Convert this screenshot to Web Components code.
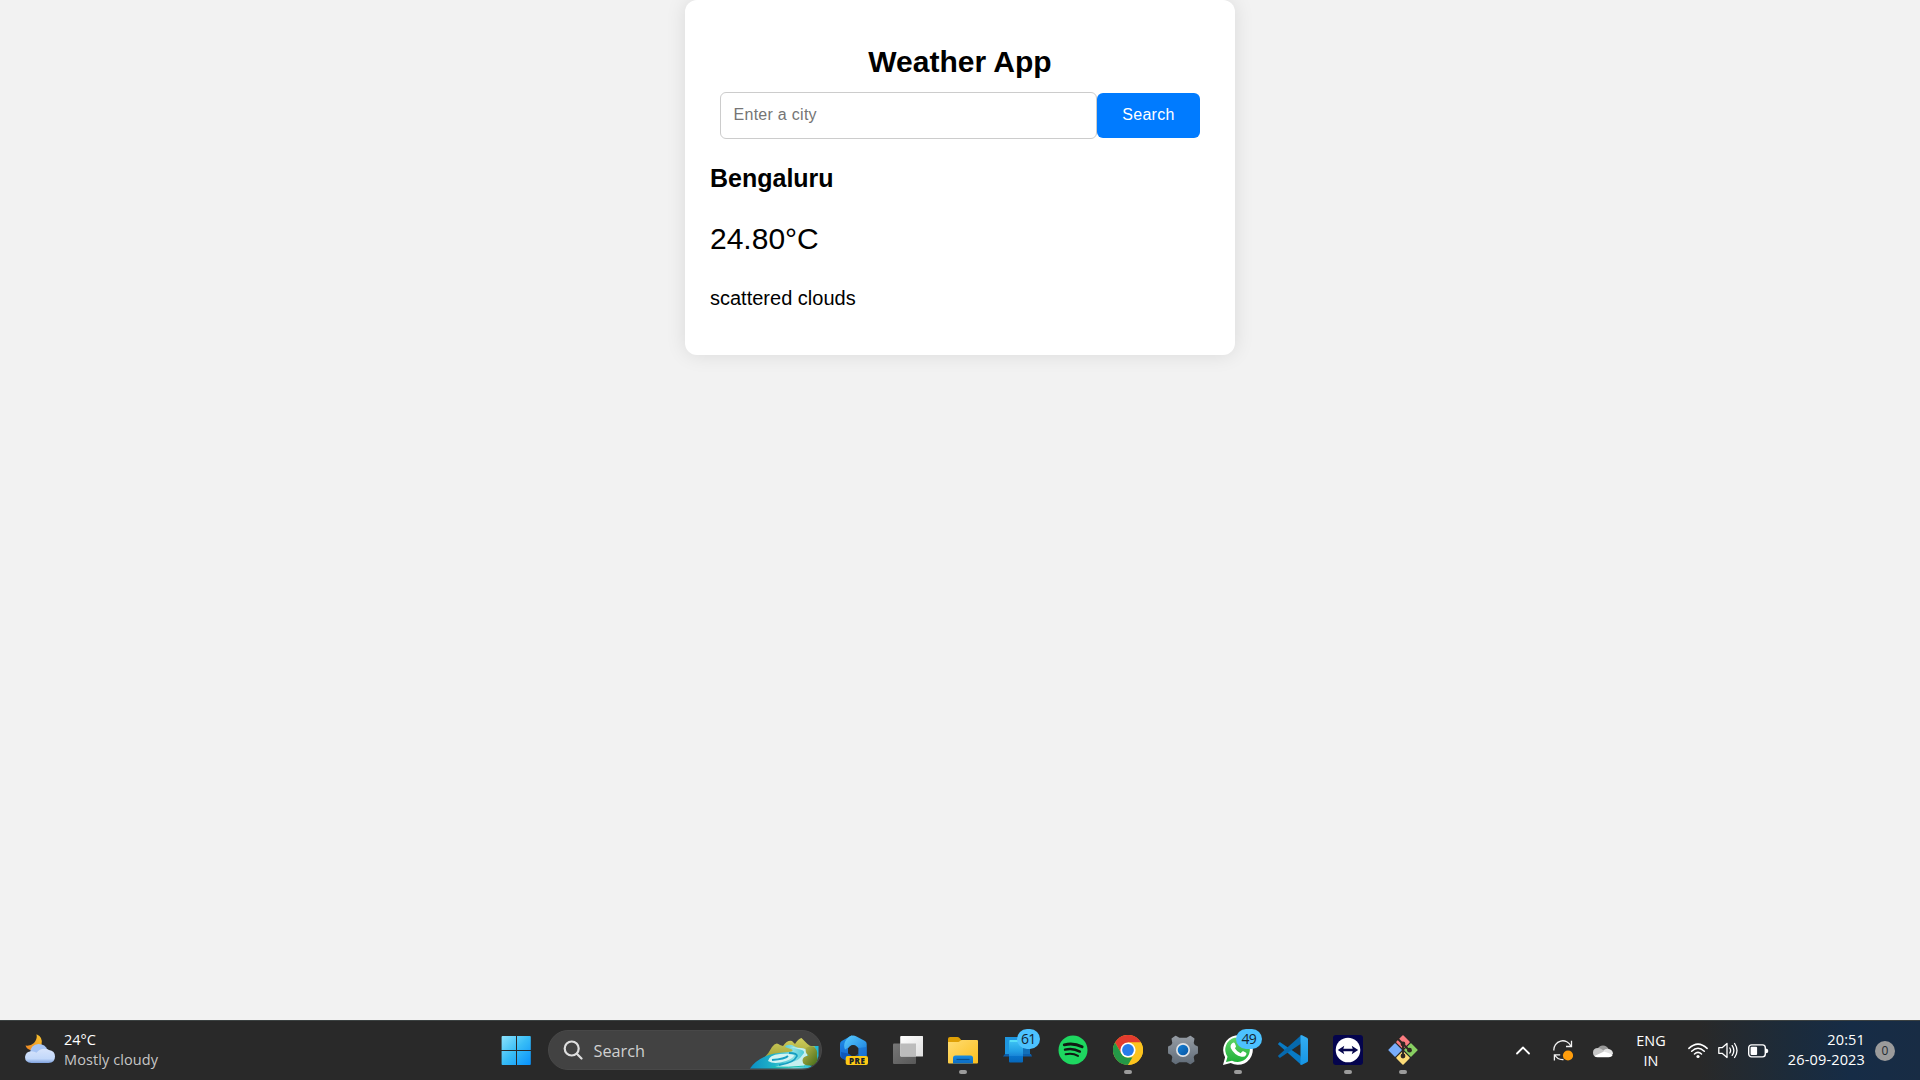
<!DOCTYPE html>
<html lang="en">
<head>
<meta charset="utf-8">
<title>Weather App</title>
<style>
html,body{height:100%;margin:0}
body{background:#f2f2f2;font-family:"Liberation Sans",Arial,sans-serif;color:#000;overflow:hidden}
</style>
</head>
<body>
<app-desktop>
  <weather-card heading="Weather App">
    <city-search slot="search" placeholder="Enter a city" action="Search"></city-search>
    <weather-report city="Bengaluru" temp="24.80°C">scattered clouds</weather-report>
  </weather-card>
  <task-bar slot="bar">
    <weather-widget slot="left" temp="24°C">Mostly cloudy</weather-widget>
    <task-icon name="start"></task-icon>
    <task-search>Search</task-search>
    <task-icon name="dev"></task-icon>
    <task-icon name="view"></task-icon>
    <task-icon name="files" running></task-icon>
    <task-icon name="phone" badge="61"></task-icon>
    <task-icon name="spotify"></task-icon>
    <task-icon name="chrome" running></task-icon>
    <task-icon name="settings"></task-icon>
    <task-icon name="whatsapp" badge="49" running></task-icon>
    <task-icon name="code"></task-icon>
    <task-icon name="teamviewer" running></task-icon>
    <task-icon name="git" running></task-icon>
    <system-tray slot="right"></system-tray>
  </task-bar>
</app-desktop>
<script>
const define = (name, html) => customElements.define(name, class extends HTMLElement {
  constructor() {
    super();
    const t = document.createElement('template');
    t.innerHTML = typeof html === 'function' ? html(this) : html;
    this.attachShadow({mode: 'open'}).append(t.content.cloneNode(true));
  }
});

const icons = {
start: `<defs><linearGradient id="a" gradientUnits="userSpaceOnUse" x1="1" y1="1" x2="29" y2="29"><stop stop-color="#8be2fd"/><stop offset=".5" stop-color="#38bdf6"/><stop offset="1" stop-color="#0a93fb"/></linearGradient></defs><path fill="url(#a)" d="M1.500 1H15v14H.6V2q0-1 .9-1zM16 1h13q.8 0 .8 1v13H16zM.6 16H15v14H1.500q-.9 0-.9-1zM16 16h13.800v13q0 1-.8 1H16z"/>`,
dev: `<defs><linearGradient id="a" x1="0" y1="0" x2="0" y2="1"><stop stop-color="#1f93ea"/><stop offset="1" stop-color="#1659c9"/></linearGradient><linearGradient id="b" x1="0" y1="0" x2="1" y2="1"><stop stop-color="#5accfd"/><stop offset="1" stop-color="#1478dc"/></linearGradient></defs><path fill="url(#a)" d="M2 9Q2 7 3.700 6L14 .3l1 9.700-5 3v5.500l5 3.500v7.500L3.500 23Q2 22 2 20z"/><path fill="url(#b)" d="M11.500 1.500q3.500-2 7 0L27 6q1.700 1 1.700 3v12L20.500 22v-9l-5.500-3-8 4.500q-3-7 4.500-13z"/><path fill="#1767ca" d="M28.700 12v10H15.500l5-3.500V13z" opacity=".55"/><path fill="#0b4fb1" d="m3 17 7 1.500 6 4V29L3.500 23z" opacity=".7"/><circle cx="15.200" cy="15" r="5" fill="#292929"/><rect x="7.700" y="21" width="22.300" height="9" rx="2" fill="#fdc915"/><text x="19.100" y="28.500" text-anchor="middle" font-family="Open Sans,sans-serif" font-weight="800" font-size="8" letter-spacing=".5" fill="#17202a">PRE</text>`,
view: `<defs><linearGradient id="a" x1="0" y1="0" x2="1" y2="1"><stop stop-color="#fff"/><stop offset="1" stop-color="#dedede"/></linearGradient><linearGradient id="b" x1="0" y1="0" x2="1" y2="1"><stop stop-color="#777"/><stop offset="1" stop-color="#585858"/></linearGradient></defs><rect x="0" y="8.500" width="23" height="20.500" rx="1" fill="url(#b)"/><rect x="7.200" y="1" width="23" height="20.500" rx="1" fill="url(#a)"/><path fill="#bcbcbc" d="M7.200 8.500H23v13H8q-.8 0-.8-.8z"/>`,
files: `<defs><linearGradient id="a" x1="0" y1="0" x2="1" y2="1"><stop stop-color="#ffdc72"/><stop offset="1" stop-color="#fbbf1e"/></linearGradient><linearGradient id="b" x1="0" y1="0" x2="0" y2="1"><stop stop-color="#178be0"/><stop offset="1" stop-color="#0c6bc2"/></linearGradient></defs><path fill="#dfa006" d="M0 4q0-2 2-2h7.500q1 0 2 1l2 2.500L9 9H0z"/><path fill="url(#a)" d="M0 7h10.500l3-2H29q1 0 1 1.200V27.500q0 1-1 1H1q-1 0-1-1z"/><path fill="url(#b)" d="M5 28.500V23q0-2.500 2.500-2.500h15q2.500 0 2.500 2.500v5.500z"/><path stroke="#08508f" stroke-width="1.200" d="M8.500 24.500h13"/>`,
phone: `<defs><linearGradient id="a" x1="0" y1="0" x2="0" y2="1"><stop stop-color="#40c5f5"/><stop offset=".5" stop-color="#229fe5"/><stop offset=".7" stop-color="#1987d8"/><stop offset=".72" stop-color="#0874cb"/><stop offset="1" stop-color="#0667ba"/></linearGradient></defs><rect x="2" y="2" width="25" height="17" fill="#126fb8"/><path fill="#1e96df" d="M2 2h13v17H2z"/><path fill="#0c5eab" d="M2 19h26l1 2.500H0z"/><rect x="6" y="5" width="14" height="22.500" rx="1" fill="url(#a)"/><path fill="#57def8" d="M7 5h12v2H7z"/>`,
spotify: `<circle cx="15" cy="15" r="14.500" fill="#1ed760"/><g fill="none" stroke="#101b13" stroke-linecap="round"><path stroke-width="2.900" d="M6.300 9.800q9.300-2.400 17.800 2"/><path stroke-width="2.400" d="M7 14.600q8-2 14.900 2"/><path stroke-width="1.900" d="M7.600 19.200q7-1.600 12.400 1.700"/></g>`,
chrome: `<circle cx="15" cy="15" r="15" fill="#fcc31e"/><path fill="#e33b2e" d="M2 7.500A15 15 0 0 1 28 7.500H15L8.500 18.800z"/><path fill="#249847" d="M2 7.500 8.500 18.800Q11 23 15 22.500h6.500L15 30A15 15 0 0 1 2 7.500z"/><path fill="#fcc31e" d="M15 7.500h13A15 15 0 0 1 15 30l6.500-11.200z"/><circle cx="15" cy="15" r="7.600" fill="#fff"/><circle cx="15" cy="15" r="5.900" fill="#287bea"/>`,
settings: `<defs><linearGradient id="a" x1="0" y1="0" x2="0" y2="1"><stop stop-color="#949ba3"/><stop offset="1" stop-color="#626d79"/></linearGradient><linearGradient id="b" x1="0" y1="0" x2="1" y2="1"><stop stop-color="#1581d6"/><stop offset="1" stop-color="#0755a3"/></linearGradient></defs><path fill="url(#a)" stroke="url(#a)" stroke-width="1.500" stroke-linejoin="round" d="M7.500 1.500 11 3.500h8l3.500-2 3.200 2.400-.8 4.300 1.600 2.600 2.700 1.200v6l-2.700 1.200-1.600 2.600.8 4.300-3.200 2.400-3.500-2h-8l-3.500 2-3.200-2.400.8-4.300-1.600-2.600L.8 18v-6l2.700-1.200 1.600-2.600-.8-4.300z"/><circle cx="15" cy="15" r="7" fill="#e1e4e7"/><circle cx="15" cy="15" r="5.300" fill="url(#b)"/>`,
whatsapp: `<defs><linearGradient id="a" x1="0" y1="0" x2="0" y2="1"><stop stop-color="#60d66a"/><stop offset="1" stop-color="#20b038"/></linearGradient></defs><path fill="#fff" d="M0 30 2.100 22.300A14.800 14.800 0 1 1 7.700 27.900z"/><path fill="url(#a)" d="M3 27 4.500 21.800A12.300 12.300 0 1 1 9 25.700z"/><path fill="#fff" d="M9.200 8.200q1.800-1.500 2.700.3l1.100 2.700q.2.700-1.100 2.100 2 3.600 5.700 5l1.600-1.800q.5-.5 1.200-.2l2.700 1.400q.8.500 0 2.200-1.300 2.300-4.500 1.800-7.300-1.500-10.700-8.500-1.100-3 1.300-5z"/>`,
code: `<defs><linearGradient id="a" x1="0" y1="0" x2="0" y2="1"><stop stop-color="#34aef2"/><stop offset="1" stop-color="#1695e5"/></linearGradient></defs><path fill="#087ac5" d="m1.800 7-1.500 1.400q-.5.500 0 1.100L22.500 29.300q1 .8 1.800.4L22.500 21z"/><path fill="#0669ae" d="m1.800 23-1.500-1.400q-.5-.5 0-1.100L22.500.7q1-.8 1.800-.4L22.500 9z"/><path fill="url(#a)" d="M22.200.5Q23 0 24 .3l5 2.400q1 .5 1 1.600v21.400q0 1.100-1 1.600l-5 2.400q-1 .4-1.800-.2.300 0 .3-1V1.500q0-1-.3-1z"/>`,
teamviewer: `<rect width="30" height="30" rx="3" fill="#04044d"/><circle cx="15" cy="15" r="12.300" fill="#fff"/><path fill="#07074d" d="m4.800 15 6.500-4.300-1 3h9.400l-1-3 6.500 4.300-6.500 4.300 1-3h-9.400l1 3z"/>`,
git: `<g transform="rotate(45 15 15)"><path fill="#fb7c80" d="M4.400 4.400h10v10h-10z"/><path fill="#7bce62" d="M15.600 4.400h10v10h-10z"/><path fill="#78adfb" d="M4.400 15.600h10v10h-10z"/><path fill="#fddc78" d="M15.600 15.600h10v10h-10z"/></g>`
};
/* The four tiles sit on the corners of a diamond: red top, green right, blue left, yellow bottom. */
icons.git = `<g transform="rotate(45 15 15)"><rect x="4.400" y="4.400" width="10" height="10" rx=".8" fill="#fb7c80"/><rect x="15.600" y="4.400" width="10" height="10" rx=".8" fill="#88cf62"/><rect x="4.400" y="15.600" width="10" height="10" rx=".8" fill="#78adfb"/><rect x="15.600" y="15.600" width="10" height="10" rx=".8" fill="#fddc78"/></g><g fill="none" stroke="#302723" stroke-width="1.900"><path d="M9.500 3.500 15 9v12M15 9l6.500 6.500"/></g><g fill="#302723"><circle cx="15" cy="9" r="2.400"/><circle cx="15" cy="21" r="2.400"/><circle cx="21.500" cy="15.200" r="2.400"/></g>`;

define('app-desktop', `<style>:host{display:flex;flex-direction:column;height:1080px}main{flex:1;display:flex;justify-content:center;align-items:flex-start}</style><main><slot></slot></main><slot name="bar"></slot>`);

define('weather-card', el => `<style>
:host{display:block;box-sizing:border-box;width:550px;height:355px;padding:44px 25px 0;background:#fff;border-radius:12px;box-shadow:0 0 20px rgba(0,0,0,.1)}
h1{margin:0 0 13px;font-size:30px;line-height:35px;text-align:center}
</style><h1>${el.getAttribute('heading')}</h1><slot name="search"></slot><slot></slot>`);

define('city-search', el => `<style>
:host{display:flex;align-items:center;padding:0 10px}
input{box-sizing:border-box;width:377px;height:47px;border:1px solid #ccc;border-radius:6px;padding:0 12.500px 2px;font:16px "Liberation Sans",Arial,sans-serif;letter-spacing:.28px;background:#fff;outline:0}
input::placeholder{color:#757575;opacity:1}
button{width:103px;height:45px;border:0;border-radius:6px;padding:0 0 2px;background:#007bff;color:#fff;font:16px "Liberation Sans",Arial,sans-serif;letter-spacing:.3px}
</style><input placeholder="${el.getAttribute('placeholder')}"><button>${el.getAttribute('action')}</button>`);

define('weather-report', el => `<style>
:host{display:flex;flex-direction:column}
h2{margin:25px 0 0;font-size:25px;line-height:28px}
.t{margin-top:29px;font-size:30px;line-height:35px}
.d{margin-top:31px;font-size:20px;line-height:23px}
</style><h2>${el.getAttribute('city')}</h2><div class="t">${el.getAttribute('temp')}</div><div class="d"><slot></slot></div>`);

define('task-bar', `<style>
:host{display:flex;box-sizing:border-box;height:60px;border-top:1px solid #3b4141;font-family:"Open Sans","Noto Sans",sans-serif;color:#fff;background:linear-gradient(90deg,#292929 0,#292929 1700px,#1c2b3a 1790px,#162c46 1850px,#182c44 1920px)}
.l{width:488.500px;display:flex}.c{display:flex}.r{flex:1;display:flex;justify-content:flex-end}
</style><div class="l"><slot name="left"></slot></div><div class="c"><slot></slot></div><div class="r"><slot name="right"></slot></div>`);

define('weather-widget', el => `<style>
:host{display:flex;padding-left:25px;gap:9px;font-size:14.500px;line-height:20px}
svg{margin-top:13px}.x{padding-top:8.500px}.d{color:#c6c6c6;letter-spacing:.1px}
</style><svg width="30" height="30" viewBox="0 0 30 30"><defs><linearGradient id="m" x1="1" y1="0" x2="0" y2="1"><stop stop-color="#f8c52e"/><stop offset="1" stop-color="#ee8423"/></linearGradient><linearGradient id="c" x1="0" y1="0" x2="0" y2="1"><stop stop-color="#d7e4fb"/><stop offset=".7" stop-color="#c2d8fa"/><stop offset="1" stop-color="#7ea1dd"/></linearGradient></defs><path fill="url(#m)" d="M11.500.3q7 3 5 10.700Q13 17.500 7 16.500 1.500 15.500.5 11.500q5 .8 8.500-2.500 3.500-4 2.500-8.700z"/><path fill="#a6c4f4" d="M5 19q.5-8.500 8.500-9 7 0 9 6l-4 10H8z"/><path fill="url(#c)" d="M6.500 29Q0 28.700 0 23q.5-5.500 6.500-5.800 3 0 5 1.500 3-4 8-4 3 0 4.500 1.300 6 .8 6 6.500 0 6-6.500 6.500z"/></svg><div class="x"><div>${el.getAttribute('temp')}</div><div class="d"><slot></slot></div></div>`);

define('task-search', `<style>
:host{display:flex;align-items:center;box-sizing:border-box;width:274px;height:40px;margin:9px 3.250px 0 4.500px;border:1px solid #484848;border-radius:20px;background:#424242;overflow:hidden;padding-left:13.500px;color:#d0d0d0;font-size:16.300px}
.s{flex:none}.x{flex:1;margin:1px 0 0 11px}.p{flex:none;margin-right:1px}
</style><svg class="s" width="20" height="20" viewBox="0 0 20 20" fill="none" stroke="#dedede" stroke-width="2.200" stroke-linecap="round"><circle cx="8.700" cy="8.500" r="7"/><path d="m13.800 13.800 4.700 4.700"/></svg><span class="x"><slot></slot></span>
<svg class="p" width="70" height="38" viewBox="0 0 70 38"><defs><linearGradient id="g" x1="0" y1="0" x2="0" y2="1"><stop stop-color="#d0cd5c"/><stop offset="1" stop-color="#94982f"/></linearGradient><linearGradient id="w" x1="0" y1="0" x2="1" y2="0"><stop stop-color="#0b8fc4"/><stop offset=".4" stop-color="#22b5c9"/><stop offset=".7" stop-color="#8adfe3"/><stop offset="1" stop-color="#1ab9d0"/></linearGradient><linearGradient id="h" x1="0" y1="0" x2="1" y2="1"><stop stop-color="#c0ba4e"/><stop offset="1" stop-color="#426b17"/></linearGradient></defs>
<path fill="#20b8d5" d="M62 15h6.500v10l-2 6-6 4z"/>
<path fill="url(#g)" d="M14 27q5-5 8-11 4-6 8-2l3 1q4-6 9-5l3 3q3-5 6.500-6l6 6q3 3 7 2l2 12-13 6H30z"/>
<path fill="url(#w)" d="M0 37.500Q5 30 14 26q7-4 24-5 6 0 4-2.500l-7-2.500q1-3 7-2l6 3q8 0 10 4l1 4-5 4 8 7-4 1.500z"/>
<path fill="#d3f4f3" d="M18 30q1-6 12-7 12-1 14 1 0 3-8 6-12 4-18 0z"/>
<path fill="#c5eff0" d="m40 16 8 2q7 1 6 4l-4 5q-4 4-16 6l-9 3 29-.5q2-3 1-5l3-8q0-5-7-5.500z"/>
<path fill="none" stroke="#169fc2" stroke-width="1.800" d="M22 29q13-1 16-4M29 34q15-2 18-9 0-3-8-3"/>
<path fill="none" stroke="#18c0ae" stroke-width="1" d="M21 36q18 1 34-1"/>
<path fill="url(#h)" d="M56 17q4-3 8-1 4 3 3 8l.500 5q-2 6-8 5.500-7 0-7-5 0-4 6-5-4-3-2.500-7.500z"/></svg>`);

define('task-icon', el => `<style>
:host{display:block;position:relative;width:55px;height:59px}
.box{display:flex;flex-direction:column;align-items:center;padding-top:14px;gap:5px}
.bar{width:8px;height:4px;border-radius:2px;background:#9b9b9b}
.badge{position:absolute;left:25px;top:8px;height:20px;border-radius:10px;background:#4cc2ff;color:#152531;font-size:14px;line-height:19.500px;text-align:center;letter-spacing:-.7px}
</style><div class="box"><svg width="30" height="30" viewBox="0 0 30 30">${icons[el.getAttribute('name')]}</svg>${el.hasAttribute('running') ? '<div class="bar"></div>' : ''}</div>${el.hasAttribute('badge') ? `<div class="badge" style="${el.getAttribute('badge') === '49' ? 'left:25.500px;width:26px' : 'left:26.500px;width:23px'}">${el.getAttribute('badge')}</div>` : ''}`);

define('system-tray', `<style>
:host{display:flex;align-items:center;height:59px;font-size:14.500px;line-height:20px;padding-right:25px}
svg{flex:none;display:block}
.lang{width:34px;margin-left:21px;text-align:center;font-size:14.400px}
.time{width:84px;margin:0 0 1px 12px;text-align:right;letter-spacing:.15px}
.n{box-sizing:border-box;width:20px;height:20px;border-radius:50%;background:#9b9b9b;color:#252b30;font-size:12px;line-height:20px;text-align:center;margin-left:10px}
</style>
<svg width="14" height="9" viewBox="0 0 14 9" fill="none" stroke="#fff" stroke-width="1.800" stroke-linecap="round" stroke-linejoin="round"><path d="m1 7.500 6-6 6 6"/></svg>
<svg style="margin-left:23px" width="20" height="21" viewBox="0 0 20 21"><path fill="none" stroke="#f2f2f2" stroke-width="1.300" d="M.9 10.500A8.900 8.900 0 0 1 18 6.300M18.500.8v5.700H13M1.400 20.500v-5.700h5.800M1.800 15A9 9 0 0 0 10.500 19.500"/><circle cx="15" cy="15.500" r="5.100" fill="#ff9d0c"/></svg>
<svg style="margin-left:20px" width="20" height="14" viewBox="0 0 20 14"><path fill="#999" d="M4.500 5A6 6 0 0 1 15.500 5L12 8z"/><path fill="#c5c5c5" d="M4.500 13Q0 13 0 8.500T5 4q3 0 7 4l-5 5z"/><path fill="#e2e2e2" d="M10 7q2.500-3 6-2 4 1 4 5H14z"/><path fill="#fff" d="M1.500 12 11 7.500l8.700 3q-.5 2.700-4.200 2.700h-11q-2 0-3-1.200z"/></svg>
<div class="lang">ENG<br>IN</div>
<svg style="margin-left:20px" width="20" height="16" viewBox="0 0 20 16" fill="none" stroke="#fff" stroke-width="1.500" stroke-linecap="round"><path d="M.9 5.400Q10-3.200 19.100 5.400M3.700 8.300q6.300-6 12.600 0M6.500 11q3.500-3.200 7 0"/><circle cx="10" cy="13.500" r="1.600" fill="#fff" stroke="none"/></svg>
<svg style="margin-left:10px" width="20" height="17" viewBox="0 0 20 17" fill="none" stroke="#fff" stroke-width="1.300" stroke-linecap="round" stroke-linejoin="round"><path d="M.8 5.700h3.300L9 1.500v14l-4.900-4.200H.8zM11.800 6q1.600 2.500 0 5M14.200 3.600q3.300 4.900 0 9.800M16.600 1.500q4.800 7 0 14"/></svg>
<svg style="margin-left:10px" width="21" height="14" viewBox="0 0 21 14"><rect x=".7" y=".9" width="16.600" height="12" rx="2.800" fill="none" stroke="#fff" stroke-width="1.400"/><rect x="2.600" y="2.800" width="6.500" height="8.200" rx="1" fill="#fff"/><path fill="#fff" d="M18 4.500q2.300.2 2.300 2.400T18 9.300z"/></svg>
<div class="time">20:51<br>26-09-2023</div><div class="n">0</div>`);
</script>
</body>
</html>
